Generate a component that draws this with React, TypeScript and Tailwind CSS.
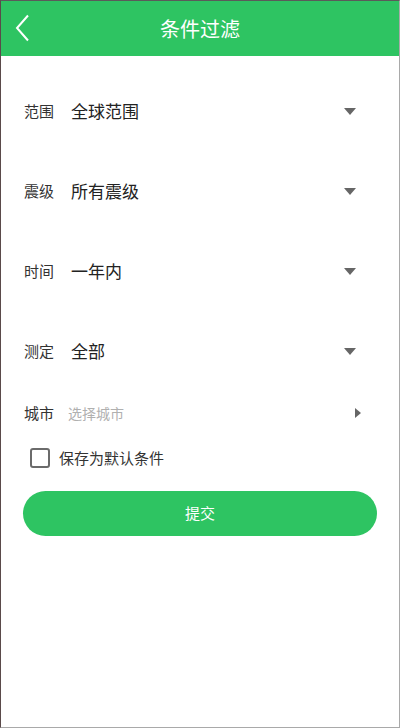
import { useState } from 'react'

const GREEN = 'bg-[#2ec462]'

const filters = [
  { label: '范围', value: '全球范围' },
  { label: '震级', value: '所有震级' },
  { label: '时间', value: '一年内' },
  { label: '测定', value: '全部' },
]

function Caret() {
  return (
    <svg width="12" height="7" viewBox="0 0 12 7" className="shrink-0">
      <path d="M0 0h12L6 7z" fill="#666" />
    </svg>
  )
}

export default function App() {
  const [saveDefault, setSaveDefault] = useState(false)

  return (
    <div
      className="h-[728px] w-[400px] overflow-hidden bg-white border-t border-l border-r border-b border-t-[#5a5a5a] border-l-[#5a4a4a] border-r-[#a9a9a9] border-b-[#a9a9a9] flex flex-col"
      style={{ fontFamily: '"Noto Sans CJK SC", "Noto Sans", sans-serif' }}
    >
      {/* Header */}
      <div className={`${GREEN} h-[55px] shrink-0 relative flex items-center justify-center`}>
        <button type="button" className="absolute left-[14px] top-[12px] w-[20px] h-[30px] flex items-center">
          <svg width="14" height="28" viewBox="0 0 14 28">
            <path d="M13 1.5L2 14l11 12.5" fill="none" stroke="#fff" strokeWidth="2" />
          </svg>
        </button>
        <h1 className="text-white text-[20px] leading-none">条件过滤</h1>
      </div>

      <div className="pt-[15px] flex flex-col">
        {filters.map(f => (
          <div key={f.label} className="h-[80px] flex items-center pl-[23px] pr-[43px]">
            <span className="text-[15px] text-[#333] w-[47px]">{f.label}</span>
            <span className="text-[17px] text-[#222] flex-1">{f.value}</span>
            <Caret />
          </div>
        ))}

        {/* City */}
        <div className="h-[44px] flex items-center pl-[23px] pr-[38px]">
          <span className="text-[15px] text-[#333] w-[44px]">城市</span>
          <span className="text-[14px] text-[#b0b0b0] flex-1">选择城市</span>
          <svg width="6" height="10" viewBox="0 0 6 10">
            <path d="M0 0l6 5-6 5z" fill="#666" />
          </svg>
        </div>

        {/* Save default */}
        <label className="h-[46px] flex items-center pl-[29px] gap-[9px] cursor-pointer">
          <input
            type="checkbox"
            checked={saveDefault}
            onChange={e => setSaveDefault(e.target.checked)}
            className="sr-only"
          />
          <span className="w-[20px] h-[20px] rounded-[3px] border-2 border-[#6b6b6b]" />
          <span className="text-[15px] text-[#333]">保存为默认条件</span>
        </label>

        <div className="px-[22px] mt-[10px]">
          <button
            type="button"
            className={`${GREEN} w-full h-[45px] rounded-full text-white text-[15px]`}
          >
            提交
          </button>
        </div>
      </div>
    </div>
  )
}
